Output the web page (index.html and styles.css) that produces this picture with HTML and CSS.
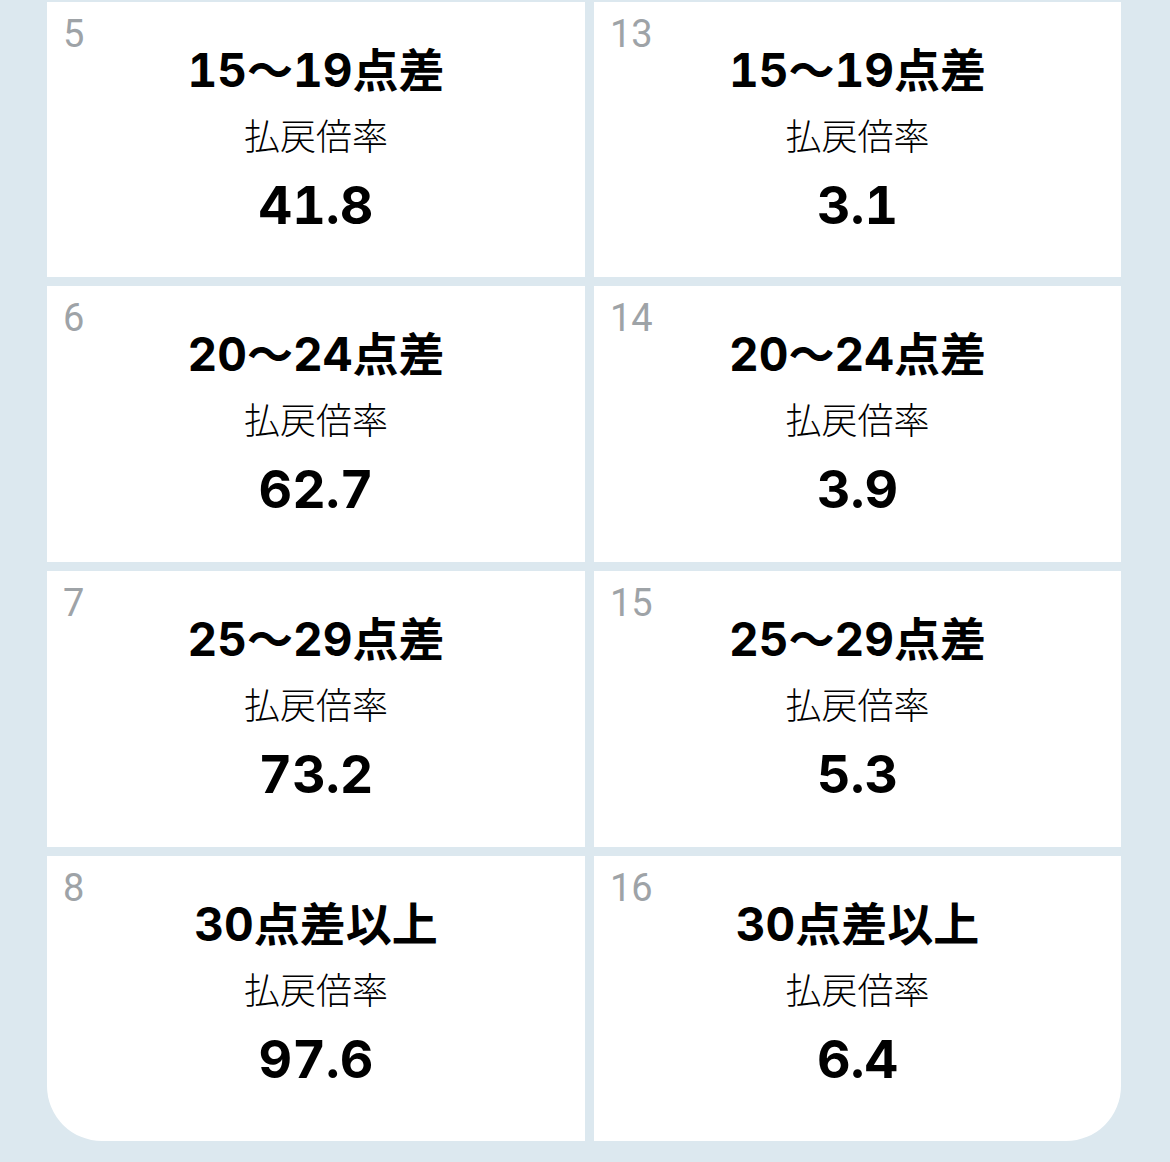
FILE: index.html
```html
<!DOCTYPE html>
<html lang="ja">
<head>
<meta charset="utf-8">
<title>払戻倍率</title>
<link rel="stylesheet" href="styles.css">
</head>
<body>
<div class="board">
  <div class="cell"><div class="no">5</div><div class="title">15〜19点差</div><div class="label">払戻倍率</div><div class="value">41.8</div></div>
  <div class="cell"><div class="no">13</div><div class="title">15〜19点差</div><div class="label">払戻倍率</div><div class="value">3.1</div></div>
  <div class="cell"><div class="no">6</div><div class="title">20〜24点差</div><div class="label">払戻倍率</div><div class="value">62.7</div></div>
  <div class="cell"><div class="no">14</div><div class="title">20〜24点差</div><div class="label">払戻倍率</div><div class="value">3.9</div></div>
  <div class="cell"><div class="no">7</div><div class="title">25〜29点差</div><div class="label">払戻倍率</div><div class="value">73.2</div></div>
  <div class="cell"><div class="no">15</div><div class="title">25〜29点差</div><div class="label">払戻倍率</div><div class="value">5.3</div></div>
  <div class="cell"><div class="no">8</div><div class="title">30点差以上</div><div class="label">払戻倍率</div><div class="value">97.6</div></div>
  <div class="cell"><div class="no">16</div><div class="title">30点差以上</div><div class="label">払戻倍率</div><div class="value">6.4</div></div>
</div>
</body>
</html>
```
FILE: styles.css
```css
html, body {
  margin: 0;
  padding: 0;
}
body {
  background: #dce8ef;
  height: 1162px;
  overflow: hidden;
  font-family: "Noto Sans CJK JP", "Noto Sans", sans-serif;
  color: #000;
}
.board {
  display: grid;
  grid-template-columns: 538px 527px;
  grid-template-rows: 275px 276px 276px 285px;
  gap: 9px;
  margin-left: 47px;
  padding-top: 2px;
  width: 1074px;
  border-radius: 0 0 55px 55px;
  overflow: hidden;
}
.cell {
  background: #fff;
  display: flex;
  flex-direction: column;
  align-items: center;
  padding: 18px 16px 0;
}
.no {
  align-self: flex-start;
  font-family: Roboto, "Noto Sans", sans-serif;
  font-size: 38px;
  line-height: 28px;
  color: #9ea3a7;
}
.title {
  font-family: Inter, "Noto Sans CJK JP", sans-serif;
  font-variant-numeric: tabular-nums;
  font-weight: 700;
  font-size: 46px;
  line-height: 40px;
  margin-top: 2px;
}
.label {
  font-weight: 300;
  font-size: 36px;
  line-height: 36px;
  margin-top: 26px;
}
.value {
  font-family: Inter, "Noto Sans CJK JP", sans-serif;
  font-variant-numeric: tabular-nums;
  font-weight: 700;
  font-size: 52px;
  line-height: 54px;
  margin-top: 27px;
}
```
